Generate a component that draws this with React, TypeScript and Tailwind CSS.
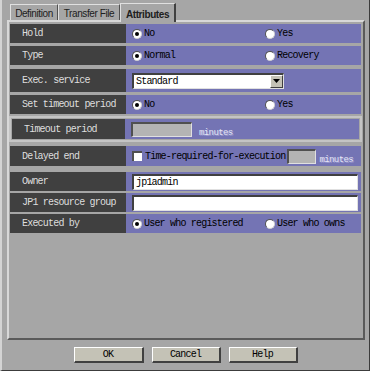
import type { ReactNode } from 'react';

/* ------------------------------------------------------------------ */
/* Small widgets                                                       */
/* ------------------------------------------------------------------ */

const mono = "font-['Liberation_Mono','DejaVu_Sans_Mono',monospace] text-[10px] tracking-[-0.8px]";

function Radio({ checked, label }: { checked?: boolean; label: string }) {
  return (
    <span className="flex items-center">
      <span className="w-[10px] h-[10px] rounded-full bg-white border border-t-[#505050] border-l-[#505050] border-r-[#d0d0d0] border-b-[#d0d0d0] flex items-center justify-center">
        {checked && <span className="w-[4px] h-[4px] rounded-full bg-black" />}
      </span>
      <span className={`${mono} text-black ml-[2px]`}>{label}</span>
    </span>
  );
}

function Disabled({ children }: { children: ReactNode }) {
  return (
    <span className="font-['Liberation_Mono',monospace] text-[9px] tracking-[-0.6px] text-[#e4e4f4] [text-shadow:1px_1px_0_#9a9ad0]">
      {children}
    </span>
  );
}

function Row({
  label,
  children,
  className = '',
}: {
  label: string;
  children?: ReactNode;
  className?: string;
}) {
  return (
    <div className={`flex h-[19px] ${className}`}>
      <div className={`w-[116px] shrink-0 bg-[#404040] text-[#dedede] pl-[12px] flex items-center ${mono}`}>
        {label}
      </div>
      <div className="flex-1 bg-[#7474b4] flex items-center pl-[6px]">{children}</div>
    </div>
  );
}

/* ------------------------------------------------------------------ */
/* App                                                                 */
/* ------------------------------------------------------------------ */

export default function App() {
  return (
    <div className="w-[370px] h-[371px] bg-[#a6a6a6] flex flex-col pt-[2px] pl-[5px] pr-[4px] border-l-2 border-l-[#d4d4d4] border-r border-r-[#3c3c3c] border-b border-b-[#3c3c3c]">
      {/* Tabs */}
      <div className="flex items-end h-[18px] pl-[3px] font-['Liberation_Sans',Arial,sans-serif] text-[10px] tracking-[-0.4px] text-[#202020]">
        <div className="w-[48px] h-[16px] pt-[1px] flex items-center justify-center border-l border-t border-l-[#e0e0e0] border-t-[#e0e0e0] border-r border-r-[#505050]">
          Definition
        </div>
        <div className="w-[62px] h-[16px] pt-[1px] flex items-center justify-center border-l border-t border-l-[#e0e0e0] border-t-[#e0e0e0] border-r border-r-[#505050]">
          Transfer File
        </div>
        <div className="w-[56px] h-[19px] mb-[-2px] z-10 bg-[#a6a6a6] flex items-start justify-center pt-[3px] font-bold border-l border-t border-l-[#e0e0e0] border-t-[#e0e0e0] border-r-2 border-r-[#404040]">
          Attributes
        </div>
      </div>

      {/* Panel */}
      <div className="h-[320px] border-2 border-t-[#d8d8d8] border-l-[#d8d8d8] border-r-[#5a5a5a] border-b-[#5a5a5a] pt-[2px] pl-[1px] pr-[2px] flex flex-col">
        <Row label="Hold">
          <span className="w-[133px]"><Radio checked label="No" /></span>
          <Radio label="Yes" />
        </Row>

        <Row label="Type" className="mt-[3px]">
          <span className="w-[133px]"><Radio checked label="Normal" /></span>
          <Radio label="Recovery" />
        </Row>

        <Row label="Exec. service" className="mt-[4px] !h-[23px]">
          <div className="w-[152px] h-[16px] bg-white border-t-2 border-l-2 border-t-[#404040] border-l-[#404040] border-b border-r border-b-[#e0e0e0] border-r-[#e0e0e0] flex items-center">
            <span className={`${mono} text-black pl-[2px] flex-1`}>Standard</span>
            <span className="w-[13px] h-[13px] bg-[#c4c2b6] border border-t-white border-l-white border-r-[#404040] border-b-[#404040] flex flex-col items-center justify-center gap-[1px]">
              <svg width="7" height="4" viewBox="0 0 7 4"><path d="M0 0h7L3.5 4z" fill="#000" /></svg>
            </span>
          </div>
        </Row>

        <Row label="Set timeout period" className="mt-[3px]">
          <span className="w-[133px]"><Radio checked label="No" /></span>
          <Radio label="Yes" />
        </Row>

        {/* Timeout group */}
        <div className="mt-[2px] border-2 border-[#c4c4c4] p-[1px] -ml-[1px] -mr-[1px]">
          <div className="flex h-[20px]">
            <div className={`w-[113px] shrink-0 bg-[#404040] text-[#dedede] pl-[12px] flex items-center ${mono}`}>
              Timeout period
            </div>
            <div className="flex-1 bg-[#7474b4] flex items-center pl-[6px]">
              <span className="w-[61px] h-[15px] bg-[#b4b4b4] border-t-2 border-l-2 border-t-[#505050] border-l-[#505050] border-r border-b border-r-[#e0e0e0] border-b-[#e0e0e0]" />
              <span className="ml-[7px]"><Disabled>minutes</Disabled></span>
            </div>
          </div>
        </div>

        <Row label="Delayed end" className="mt-[4px] !h-[20px]">
          <span className="w-[10px] h-[10px] bg-white border-t-2 border-l-2 border-t-[#505050] border-l-[#505050]" />
          <span className={`${mono} text-black ml-[3px]`}>Time-required-for-execution</span>
          <span className="ml-[2px] w-[29px] h-[15px] bg-[#b4b4b4] border-t-2 border-l-2 border-t-[#505050] border-l-[#505050] border-r border-b border-r-[#e0e0e0] border-b-[#e0e0e0]" />
          <span className="ml-[3px]"><Disabled>minutes</Disabled></span>
        </Row>

        <Row label="Owner" className="mt-[6px]">
          <div className="w-[226px] h-[16px] bg-white border-t-2 border-l-2 border-t-[#404040] border-l-[#404040] border-b border-r border-b-[#e0e0e0] border-r-[#e0e0e0] flex items-center">
            <span className={`${mono} text-black pl-[2px]`}>jp1admin</span>
          </div>
        </Row>

        <Row label="JP1 resource group" className="mt-[2px]">
          <div className="w-[226px] h-[16px] bg-white border-t-2 border-l-2 border-t-[#404040] border-l-[#404040] border-b border-r border-b-[#e0e0e0] border-r-[#e0e0e0]" />
        </Row>

        <Row label="Executed by" className="mt-[2px]">
          <span className="w-[133px]"><Radio checked label="User who registered" /></span>
          <Radio label="User who owns" />
        </Row>
      </div>

      {/* Buttons */}
      <div className="flex justify-center gap-[8px] mt-[7px] pr-[1px]">
        {['OK', 'Cancel', 'Help'].map((b, i) => (
          <button
            key={b}
            type="button"
            className={`${i === 0 ? 'w-[70px]' : 'w-[69px]'} h-[16px] bg-[#c4c2b6] border border-t-white border-l-white border-r-2 border-b-2 border-r-[#404040] border-b-[#404040] text-black flex items-center justify-center ${mono}`}
          >
            {b}
          </button>
        ))}
      </div>
    </div>
  );
}
